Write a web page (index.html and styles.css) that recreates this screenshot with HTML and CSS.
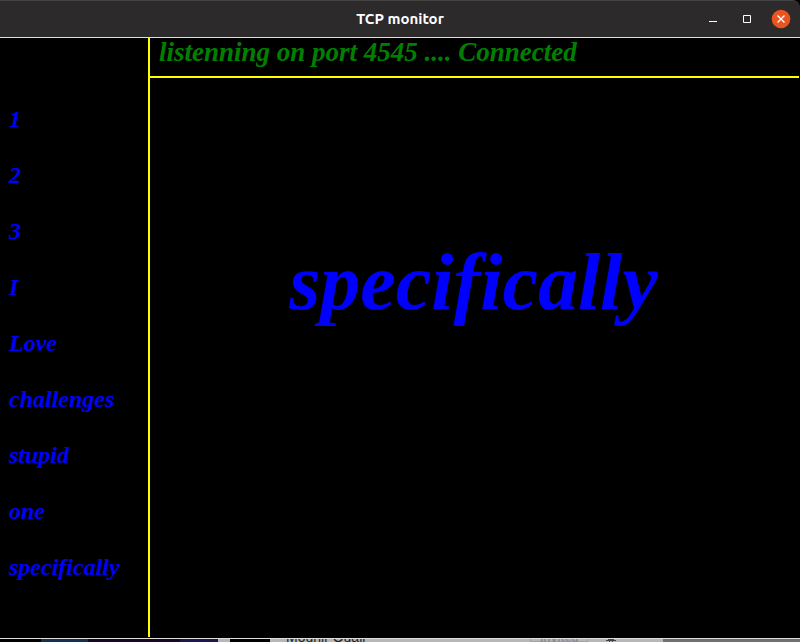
FILE: index.html
```html
<!DOCTYPE html>
<html lang="en">
<head>
<meta charset="utf-8">
<title>TCP monitor</title>
<link rel="stylesheet" href="styles.css">
</head>
<body>
<div class="window">
  <header class="titlebar">
    <h1 class="title">TCP monitor</h1>
    <div class="controls">
      <button class="control" type="button" aria-label="Minimize">
        <svg width="20" height="20" viewBox="0 0 20 20"><path d="M6 12h8v1H6z" fill="#fff"/></svg>
      </button>
      <button class="control" type="button" aria-label="Maximize">
        <svg width="20" height="20" viewBox="0 0 20 20"><path d="M6.500 6.500h7v7h-7z" fill="none" stroke="#fff"/></svg>
      </button>
      <button class="control" type="button" aria-label="Close">
        <svg width="20" height="20" viewBox="0 0 20 20"><circle cx="10" cy="10" r="9.300" fill="#e95420"/><path d="M6.500 6.500l7 7M13.500 6.500l-7 7" stroke="#fff" stroke-width="1.400"/></svg>
      </button>
    </div>
  </header>
  <main class="content">
    <ul class="history">
      <li>1</li>
      <li>2</li>
      <li>3</li>
      <li>I</li>
      <li>Love</li>
      <li>challenges</li>
      <li>stupid</li>
      <li>one</li>
      <li>specifically</li>
    </ul>
    <section class="monitor">
      <p class="status">listenning on port 4545 .... Connected</p>
      <p class="message">specifically</p>
    </section>
  </main>
</div>
<div class="desktop">
  <div class="wallpaper"></div>
  <div class="behind">
    <span class="avatar"></span>
    <span class="name">Mounir Ouali</span>
    <span class="badge">Invited</span>
    <svg class="gear" width="10" height="3" viewBox="0 0 10 3"><path d="M2 0h6v1h2v1H7v1H6V2H4v1H3V2H0V1h2z" fill="#444450"/></svg>
  </div>
  <div class="panel"></div>
</div>
</body>
</html>
```
FILE: styles.css
```css
* {
  box-sizing: border-box;
}

body {
  display: flex;
  flex-direction: column;
  height: 100vh;
  margin: 0;
  overflow: hidden;
  background: #000;
  font-family: "Liberation Serif", serif;
}

.window {
  display: flex;
  flex: 1;
  flex-direction: column;
  min-height: 0;
  border-bottom: 1px solid #dedede;
}

.titlebar {
  display: grid;
  grid-template-columns: 1fr auto 1fr;
  align-items: center;
  height: 38px;
  padding-right: 9px;
  border-top: 1px solid #454344;
  border-bottom: 1px solid #dedede;
  border-top-right-radius: 8px;
  background: #2c2a2b;
}

.title {
  grid-column: 2;
  margin: 0;
  padding-left: 9px;
  color: #fff;
  font: bold 15px/18px Ubuntu, "Noto Sans", sans-serif;
}

.controls {
  display: flex;
  gap: 14px;
  justify-content: flex-end;
}

.control {
  width: 20px;
  height: 20px;
  padding: 0;
  border: 0;
  background: none;
}

.control svg {
  display: block;
}

.content {
  display: flex;
  flex: 1;
  min-height: 0;
  padding: 0 1px 1px 0;
  font-style: italic;
  font-weight: bold;
}

.history {
  width: 150px;
  margin: 0;
  padding: 53px 0 0 9px;
  border-right: 2px solid #ff0;
  color: #00f;
  font-size: 24px;
  line-height: 56px;
  list-style: none;
  font-variant-ligatures: none;
}

.monitor {
  display: flex;
  flex: 1;
  flex-direction: column;
}

.status {
  height: 40px;
  margin: 0;
  padding-left: 9px;
  border-bottom: 2px solid #ff0;
  color: #008000;
  font-size: 27px;
  line-height: 28px;
}

.message {
  margin: 0;
  padding: 158px 2px 0 0;
  color: #00f;
  font-size: 80px;
  line-height: 92px;
  text-align: center;
  font-variant-ligatures: none;
}

.desktop {
  display: flex;
  height: 3px;
  overflow: hidden;
}

.wallpaper {
  width: 218px;
  background: linear-gradient(90deg, #000 41px, #123050 41px 88px, #1b0525 88px 180px, #191650 180px);
}

.behind {
  display: flex;
  width: 445px;
  padding-left: 12px;
  background: #b7b7b7;
  font: 14px/16px "Liberation Sans", sans-serif;
}

.avatar {
  width: 40px;
  background: #000;
}

.name {
  width: 260px;
  padding-left: 16px;
  margin-top: -10px;
  color: #222;
}

.badge {
  width: 58px;
  padding-left: 9px;
  margin-top: -9px;
  border: 1px solid #a3a3a3;
  color: #8c8c98;
  font-size: 12px;
  font-weight: bold;
  line-height: 14px;
}

.gear {
  margin-left: 18px;
}

.panel {
  flex: 1;
  background: #707070;
}
```
